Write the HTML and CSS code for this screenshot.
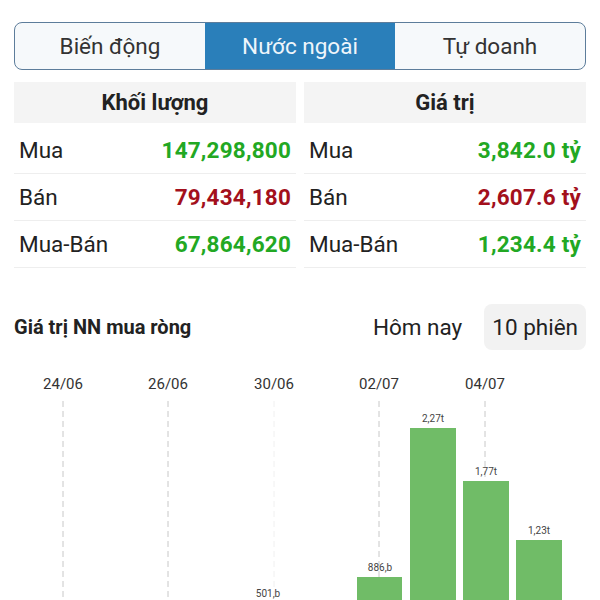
FILE: index.html
```html
<!DOCTYPE html>
<html lang="vi">
<head>
  <meta charset="UTF-8">
  <meta name="viewport" content="width=device-width, initial-scale=1.0">
  <title>Nước ngoài</title>
  <link rel="stylesheet" href="styles.css">
</head>
<body>
  <div class="tabs">
    <div class="tab">Biến động</div>
    <div class="tab active">Nước ngoài</div>
    <div class="tab">Tự doanh</div>
  </div>

  <div class="stats">
    <div class="stat-col">
      <div class="stat-head">Khối lượng</div>
      <div class="stat-row"><span>Mua</span><b class="up">147,298,800</b></div>
      <div class="stat-row"><span>Bán</span><b class="down">79,434,180</b></div>
      <div class="stat-row"><span>Mua-Bán</span><b class="up">67,864,620</b></div>
    </div>
    <div class="stat-col">
      <div class="stat-head">Giá trị</div>
      <div class="stat-row"><span>Mua</span><b class="up">3,842.0 tỷ</b></div>
      <div class="stat-row"><span>Bán</span><b class="down">2,607.6 tỷ</b></div>
      <div class="stat-row"><span>Mua-Bán</span><b class="up">1,234.4 tỷ</b></div>
    </div>
  </div>

  <div class="section-head">
    <div class="section-title">Giá trị NN mua ròng</div>
    <div class="range">
      <div class="range-btn">Hôm nay</div>
      <div class="range-btn selected">10 phiên</div>
    </div>
  </div>

  <svg class="chart" width="600" height="240" viewBox="0 0 600 240">
    <!-- date labels -->
    <g class="axis-label">
      <text x="63" y="25">24/06</text>
      <text x="168" y="25">26/06</text>
      <text x="274" y="25">30/06</text>
      <text x="379" y="25">02/07</text>
      <text x="485" y="25">04/07</text>
    </g>
    <!-- grid lines -->
    <g class="grid">
      <line x1="63" y1="37" x2="63" y2="240"/>
      <line x1="168" y1="37" x2="168" y2="240"/>
      <line class="faint" x1="274" y1="37" x2="274" y2="240"/>
      <line x1="379" y1="37" x2="379" y2="240"/>
      <line x1="485" y1="37" x2="485" y2="240"/>
    </g>
    <!-- bars -->
    <g class="bar">
      <rect x="357" y="213" width="45" height="40"/>
      <rect x="410" y="64" width="46" height="190"/>
      <rect x="463" y="117" width="46" height="140"/>
      <rect x="516" y="176" width="46" height="80"/>
    </g>
    <g class="bar-label">
      <text x="268" y="233">501,b</text>
      <text x="380" y="207">886,b</text>
      <text x="433" y="58">2,27t</text>
      <text x="486" y="111">1,77t</text>
      <text x="539" y="170">1,23t</text>
    </g>
  </svg>
</body>
</html>
```

FILE: styles.css
```css
* {
  margin: 0;
  padding: 0;
  box-sizing: border-box;
}
body {
  font-family: Roboto, "Noto Sans", Arial, sans-serif;
  background-color: #ffffff;
  color: #222;
  width: 600px;
  overflow: hidden;
}

/* Top tabs */
.tabs {
  display: flex;
  margin: 22px 14px 0 14px;
  height: 48px;
  border: 1.5px solid #5d7d9b;
  border-radius: 8px;
  overflow: hidden;
  background-color: #f6f9fb;
}
.tab {
  flex: 1;
  display: flex;
  align-items: center;
  justify-content: center;
  font-size: 22.5px;
  color: #333;
}
.tab.active {
  background-color: #2a7fba;
  color: #eef5fb;
}

/* Volume / value tables */
.stats {
  display: grid;
  grid-template-columns: 1fr 1fr;
  gap: 8px;
  margin: 12px 14px 0 14px;
}
.stat-head {
  height: 41px;
  display: flex;
  align-items: center;
  justify-content: center;
  background-color: #f4f4f4;
  font-size: 22px;
  font-weight: 700;
  color: #222;
  margin-bottom: 4px;
}
.stat-row {
  height: 47px;
  display: flex;
  align-items: center;
  justify-content: space-between;
  padding: 0 5px 0 5px;
  border-bottom: 1px solid #eeeeee;
  font-size: 22.5px;
}
.stat-row b {
  font-weight: 700;
  letter-spacing: 0.2px;
}
.up {
  color: #22a823;
}
.down {
  color: #a3101c;
}

/* Net buy section */
.section-head {
  display: flex;
  align-items: center;
  justify-content: space-between;
  margin: 36px 14px 0 14px;
}
.section-title {
  font-size: 20px;
  font-weight: 700;
  color: #222;
}
.range {
  display: flex;
}
.range-btn {
  font-size: 22.5px;
  color: #222;
  padding: 0 8px;
  height: 46px;
  display: flex;
  align-items: center;
  border-radius: 8px;
}
.range-btn.selected {
  background-color: #f2f2f2;
  margin-left: 14px;
}

/* Chart */
.chart {
  display: block;
  margin-top: 14px;
}
.axis-label text {
  font-size: 15px;
  fill: #333;
  text-anchor: middle;
}
.grid line {
  stroke: #c8c8c8;
  stroke-width: 1;
  stroke-dasharray: 6 4;
}
.grid line.faint {
  stroke: #f0f0f0;
}
.bar rect {
  fill: #70bc67;
}
.bar-label text {
  font-size: 10px;
  fill: #444;
  text-anchor: middle;
}
```
